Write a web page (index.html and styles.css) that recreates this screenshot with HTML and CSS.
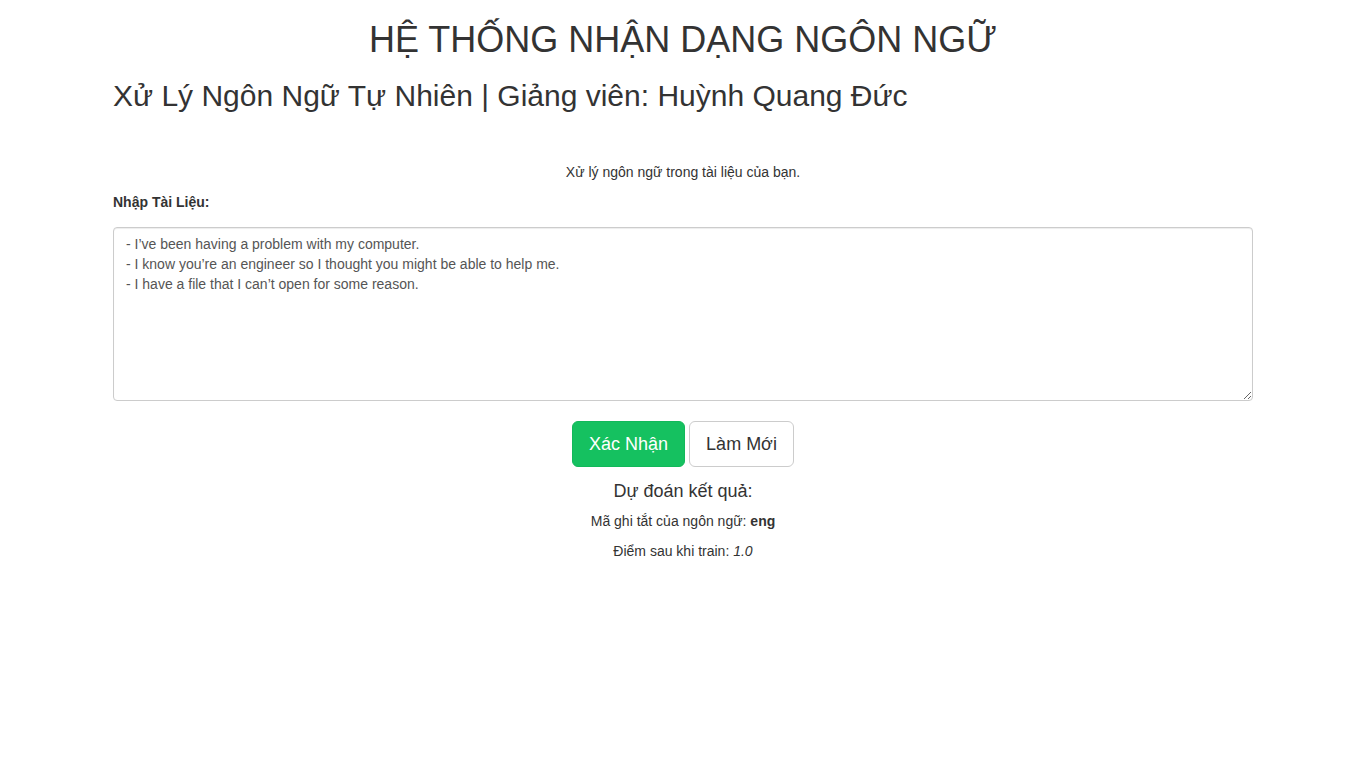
FILE: index.html
```html
<!DOCTYPE html>
<html lang="vi">
<head>
<meta charset="utf-8">
<title>Hệ thống nhận dạng ngôn ngữ</title>
<link rel="stylesheet" href="styles.css">
</head>
<body>
<div class="container">
  <h1 class="title">HỆ THỐNG NHẬN DẠNG NGÔN NGỮ</h1>
  <h2 class="subtitle">Xử Lý Ngôn Ngữ Tự Nhiên | Giảng viên: Huỳnh Quang Đức</h2>
  <p class="intro">Xử lý ngôn ngữ trong tài liệu của bạn.</p>
  <form class="form">
    <label class="label" for="doc">Nhập Tài Liệu:</label>
    <textarea id="doc" class="input" rows="8">- I’ve been having a problem with my computer.
- I know you’re an engineer so I thought you might be able to help me.
- I have a file that I can’t open for some reason.</textarea>
    <div class="actions">
      <button type="button" class="btn btn-primary">Xác Nhận</button>
      <button type="button" class="btn btn-default">Làm Mới</button>
    </div>
  </form>
  <div class="result">
    <h4 class="result-title">Dự đoán kết quả:</h4>
    <p class="result-line">Mã ghi tắt của ngôn ngữ: <b>eng</b></p>
    <p class="result-line">Điểm sau khi train: <i>1.0</i></p>
  </div>
</div>
</body>
</html>
```
FILE: styles.css
```css
* { box-sizing: border-box; }
html, body { margin: 0; padding: 0; background: #fff; }
body {
  font-family: "Liberation Sans", Arial, sans-serif;
  font-size: 14px;
  line-height: 1.42857;
  color: #333;
}
.container {
  width: 1170px;
  margin: 0 auto;
  padding: 0 15px;
}
.title {
  font-size: 36px;
  font-weight: 500;
  line-height: 1.1;
  margin: 20px 0 0;
  text-align: center;
  font-family: "Liberation Sans", Arial, sans-serif;
}
.subtitle {
  font-size: 30px;
  font-weight: 500;
  line-height: 1.1;
  margin: 19px 0 0;
}
.intro {
  text-align: center;
  margin: 51px 0 0;
}
.form { display: flex; flex-direction: column; }
.label {
  font-weight: bold;
  margin-top: 10px;
  margin-bottom: 14px;
}
.input {
  display: block;
  width: 100%;
  height: 174px;
  padding: 7px 12px 5px;
  font-family: "Liberation Sans", Arial, sans-serif;
  font-size: 14px;
  line-height: 1.42857;
  color: #555;
  background: #fff;
  border: 1px solid #ccc;
  border-radius: 4px;
  box-shadow: inset 0 1px 1px rgba(0,0,0,.075);
  resize: vertical;
}
.actions {
  display: flex;
  justify-content: center;
  gap: 4px;
  margin-top: 20px;
}
.btn {
  font-family: "Liberation Sans", Arial, sans-serif;
  font-size: 18px;
  line-height: 1.3333;
  padding: 11px 16px 9px;
  border-radius: 6px;
  border: 1px solid transparent;
  cursor: pointer;
}
.btn-primary {
  background: #15c160;
  border-color: #12b85a;
  color: #fff;
}
.btn-default {
  background: #fff;
  border-color: #ccc;
  color: #333;
}
.result { text-align: center; }
.result-title {
  font-size: 18px;
  font-weight: 500;
  line-height: 1.1;
  margin: 15px 0 11px;
}
.result-line { margin: 0 0 10px; }
```
